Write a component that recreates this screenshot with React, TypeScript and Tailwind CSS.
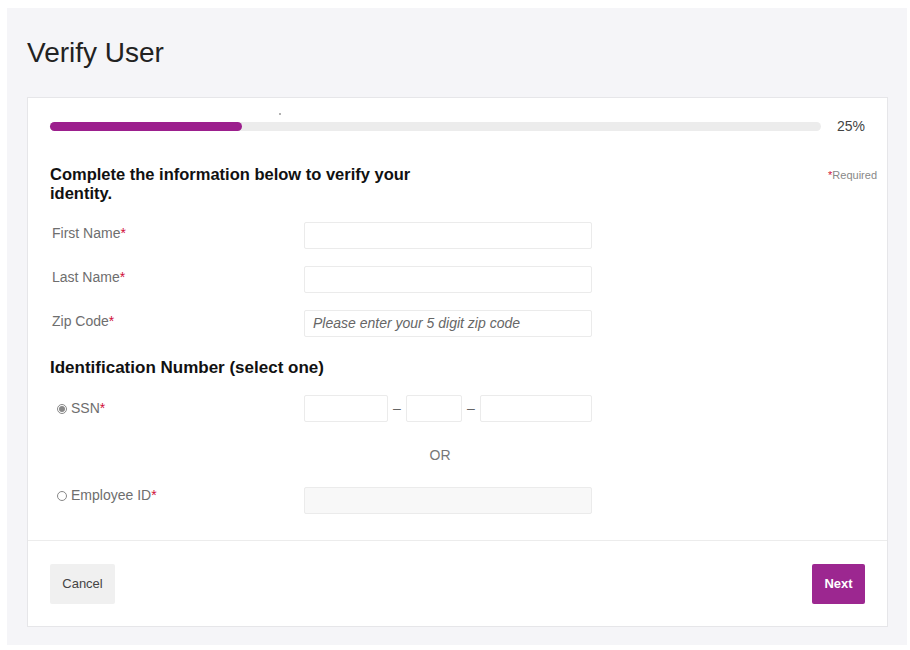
import React from "react";

const FONT = "font-['Liberation_Sans',Arial,sans-serif]";

function Req() {
  return <span className="text-[#d0103a]">*</span>;
}

function Field({ label, placeholder }: { label: string; placeholder?: string }) {
  return (
    <div className="grid grid-cols-[254px_288px] items-center h-[27px]">
      <div className="pl-[2px] text-[14px] text-[#6e6e6e] -mt-[4px]">
        {label}
        <Req />
      </div>
      <div className="h-[27px] border border-[#ebebeb] rounded-[2px] bg-white flex items-center px-[8px]">
        {placeholder && (
          <span className="italic text-[14px] text-[#666]">{placeholder}</span>
        )}
      </div>
    </div>
  );
}

function Radio({ checked }: { checked?: boolean }) {
  return (
    <span className="inline-flex w-[10px] h-[10px] rounded-full border border-[#888] items-center justify-center mr-[4px] bg-white">
      {checked && <span className="w-[6px] h-[6px] rounded-full bg-[#888]" />}
    </span>
  );
}

export default function App() {
  return (
    <div className={`w-[910px] h-[650px] bg-white pt-[8px] pl-[7px] ${FONT}`}>
      <div className="w-[900px] h-[637px] bg-[#f5f5f8] pt-[28px] pl-[20px]">
        <h1 className="text-[28px] leading-[34px] text-[#222]">Verify User</h1>

        <div className="mt-[27px] w-[861px] h-[530px] bg-white border border-[#e6e6e9] flex flex-col">
          <div className="flex-1 px-[22px] pt-[18px]">
            {/* progress */}
            <div className="relative flex items-center">
              <span className="absolute left-[229px] -top-[3px] w-[2px] h-[2px] rounded-full bg-[#999]" />
              <div className="w-[771px] h-[9px] rounded-full bg-[#ececec]">
                <div className="w-[192px] h-[9px] rounded-full bg-[#9c1f8d]" />
              </div>
              <span className="ml-[16px] text-[14px] text-[#444]">25%</span>
            </div>

            {/* heading */}
            <div className="flex justify-between mt-[28px]">
              <h2 className="w-[395px] text-[16.5px] leading-[19px] font-bold text-[#111]">
                Complete the information below to verify your identity.
              </h2>
              <span className="text-[11px] text-[#888] mt-[2px] -mr-[12px]">
                <Req />
                Required
              </span>
            </div>

            <div className="mt-[19px] flex flex-col gap-[17px]">
              <Field label="First Name" />
              <Field label="Last Name" />
              <Field label="Zip Code" placeholder="Please enter your 5 digit zip code" />
            </div>

            <h2 className="mt-[22px] text-[17px] leading-[18px] font-bold text-[#111]">
              Identification Number (select one)
            </h2>

            <div className="mt-[18px] grid grid-cols-[254px_288px] items-center h-[27px]">
              <div className="pl-[7px] text-[14px] text-[#6e6e6e] flex items-center">
                <Radio checked />
                SSN
                <Req />
              </div>
              <div className="flex items-center">
                <div className="w-[84px] h-[27px] border border-[#ebebeb] rounded-[2px]" />
                <span className="w-[18px] text-center text-[#666] text-[14px]">–</span>
                <div className="w-[56px] h-[27px] border border-[#ebebeb] rounded-[2px]" />
                <span className="w-[18px] text-center text-[#666] text-[14px]">–</span>
                <div className="w-[112px] h-[27px] border border-[#ebebeb] rounded-[2px]" />
              </div>
            </div>

            <div className="grid grid-cols-[254px_288px] mt-[23px]">
              <div />
              <div className="text-center text-[14px] text-[#777] pr-[16px]">OR</div>
            </div>

            <div className="mt-[21px] grid grid-cols-[254px_288px] items-center h-[27px]">
              <div className="pl-[7px] text-[14px] text-[#6e6e6e] flex items-center -mt-[10px]">
                <Radio />
                Employee ID
                <Req />
              </div>
              <div className="h-[27px] border border-[#ebebeb] rounded-[2px] bg-[#f8f8f8]" />
            </div>
          </div>

          {/* footer */}
          <div className="border-t border-[#ececec] h-[86px] px-[22px] flex items-center justify-between">
            <button className="w-[65px] h-[40px] bg-[#f0f0f0] text-[13px] text-[#444] rounded-[2px]">
              Cancel
            </button>
            <button className="w-[53px] h-[40px] bg-[#9c2790] text-[13px] font-bold text-white rounded-[2px]">
              Next
            </button>
          </div>
        </div>
      </div>
    </div>
  );
}
